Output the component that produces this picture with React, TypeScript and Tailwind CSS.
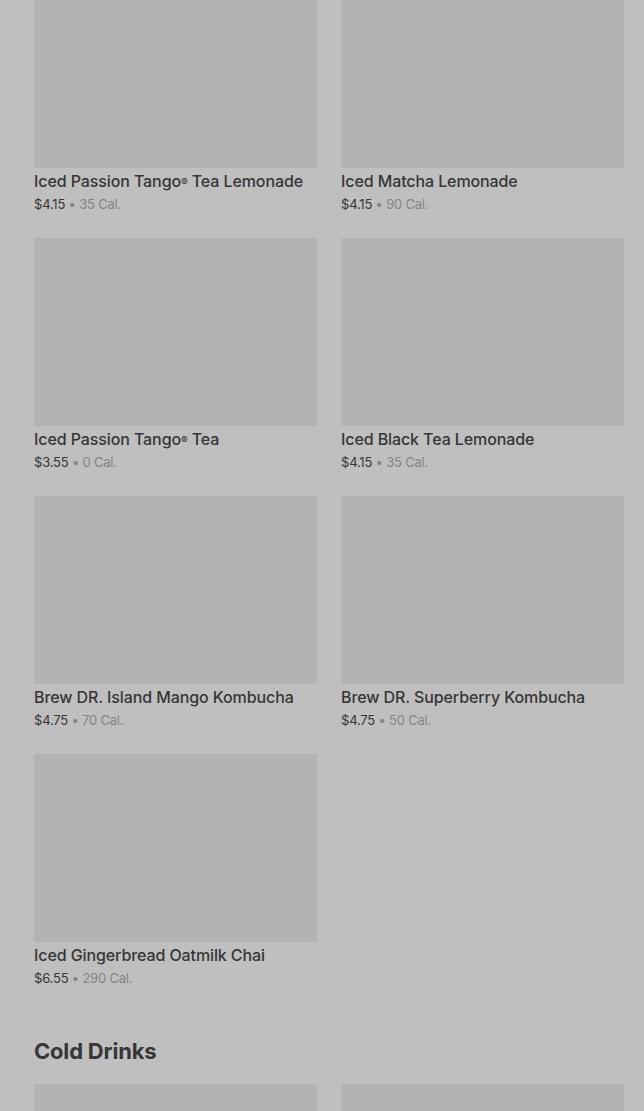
import React from "react";

type Item = { name: string; reg?: boolean; suffix?: string; price: string; cal: string };

const items: Item[] = [
  { name: "Iced Passion Tango", reg: true, suffix: " Tea Lemonade", price: "$4.15", cal: "35 Cal." },
  { name: "Iced Matcha Lemonade", price: "$4.15", cal: "90 Cal." },
  { name: "Iced Passion Tango", reg: true, suffix: " Tea", price: "$3.55", cal: "0 Cal." },
  { name: "Iced Black Tea Lemonade", price: "$4.15", cal: "35 Cal." },
  { name: "Brew DR. Island Mango Kombucha", price: "$4.75", cal: "70 Cal." },
  { name: "Brew DR. Superberry Kombucha", price: "$4.75", cal: "50 Cal." },
  { name: "Iced Gingerbread Oatmilk Chai", price: "$6.55", cal: "290 Cal." },
];

function Card({ item }: { item: Item }) {
  return (
    <div className="flex flex-col">
      <div className="h-[188px] w-full rounded-[2px] bg-[#b3b3b3]" />
      <div className="mt-[2px] text-[16px] leading-[22px] font-medium text-[#363636] tracking-[-0.1px] whitespace-nowrap">
        {item.name}
        {item.reg && <sup className="text-[10px] relative top-[-1px]">®</sup>}
        {item.suffix}
      </div>
      <div className="mt-[2px] text-[13px] leading-[20px] whitespace-nowrap tracking-[-0.2px]">
        <span className="text-[#363636]">{item.price}</span>
        <span className="text-[#858585]"> • {item.cal}</span>
      </div>
    </div>
  );
}

export default function App() {
  return (
    <div
      className="w-[644px] h-[1111px] overflow-hidden bg-[#bfbfbf]"
      style={{ fontFamily: "Inter, 'Noto Sans', sans-serif" }}
    >
      <div className="-mt-[20px] pl-[34px] pr-[20px]">
        <div className="grid grid-cols-2 gap-x-[24px] gap-y-[24px]">
          {items.map((it, i) => (
            <Card key={i} item={it} />
          ))}
        </div>
        <h2 className="mt-[49px] text-[22px] leading-[28px] font-bold text-[#363636] tracking-[-0.2px]">
          Cold Drinks
        </h2>
        <div className="mt-[19px] grid grid-cols-2 gap-x-[24px]">
          <div className="h-[188px] rounded-[2px] bg-[#b3b3b3]" />
          <div className="h-[188px] rounded-[2px] bg-[#b3b3b3]" />
        </div>
      </div>
    </div>
  );
}
